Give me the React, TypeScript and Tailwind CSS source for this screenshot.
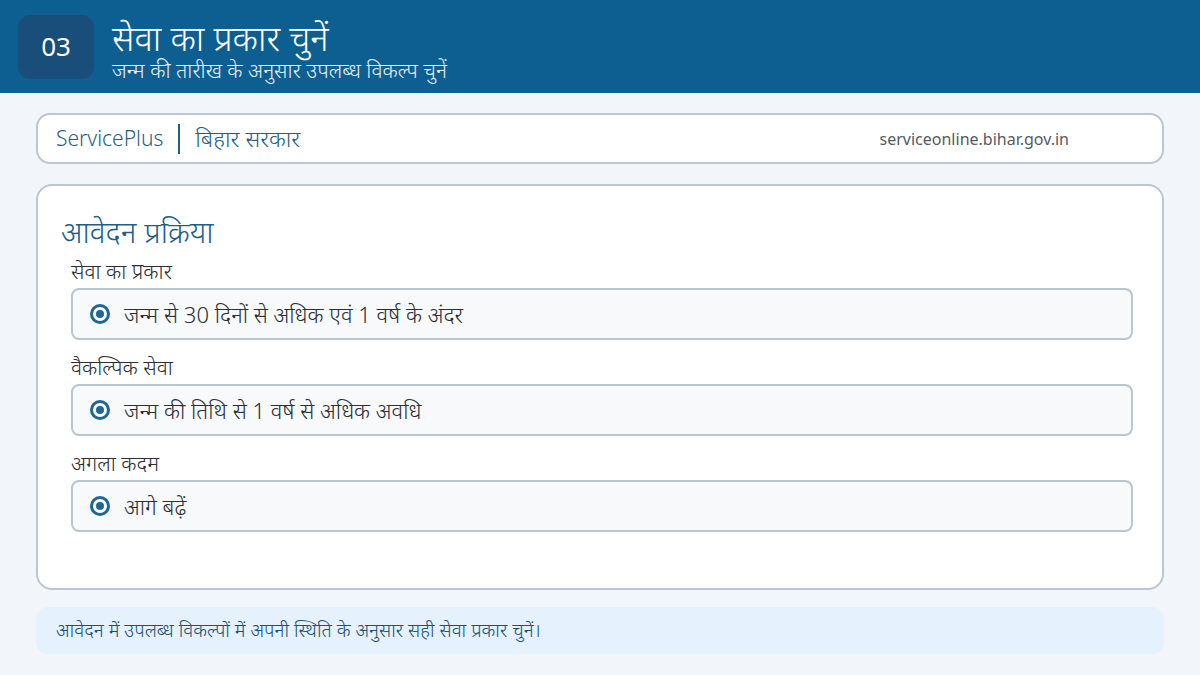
const font = { fontFamily: '"Noto Sans", "Lohit Devanagari", "Noto Sans Devanagari", sans-serif' };

const groups = [
  { label: "सेवा का प्रकार", option: "जन्म से 30 दिनों से अधिक एवं 1 वर्ष के अंदर" },
  { label: "वैकल्पिक सेवा", option: "जन्म की तिथि से 1 वर्ष से अधिक अवधि" },
  { label: "अगला कदम", option: "आगे बढ़ें" },
];

function Radio() {
  return (
    <span className="flex h-[20px] w-[20px] shrink-0 items-center justify-center rounded-full border-[3px] border-[#1d6797] bg-white">
      <span className="h-[8px] w-[8px] rounded-full bg-[#1d6797]" />
    </span>
  );
}

export default function App() {
  return (
    <div className="flex h-[675px] w-[1200px] flex-col overflow-hidden bg-[#f2f6fa] font-light" style={font}>
      {/* Header */}
      <header className="flex h-[93px] shrink-0 items-center gap-[18px] bg-[#0e5f91] pl-[18px]">
        <div className="flex h-[64px] w-[76px] items-center justify-center rounded-[12px] bg-[#1a4e7a] text-[26px] font-normal text-white">
          03
        </div>
        <div className="flex flex-col pt-[8px]">
          <div className="text-[35px] leading-[38px] text-white">सेवा का प्रकार चुनें</div>
          <div className="text-[21px] leading-[26px] text-[#e3eef7]">जन्म की तारीख के अनुसार उपलब्ध विकल्प चुनें</div>
        </div>
      </header>

      <main className="flex flex-1 flex-col px-[36px] pt-[20px]">
        {/* Top bar */}
        <div className="flex h-[51px] items-center rounded-[14px] border-2 border-[#bcc6cf] bg-white pl-[18px] pr-[93px]">
          <span className="text-[21px] text-[#1f5f87]">ServicePlus</span>
          <span className="mx-[15px] h-[30px] w-[2px] bg-[#1f5f87]" />
          <span className="text-[23px] text-[#1f5f87]">बिहार सरकार</span>
          <span className="ml-auto text-[16px] font-normal text-[#555b61]">serviceonline.bihar.gov.in</span>
        </div>

        {/* Main card */}
        <div className="mt-[20px] h-[406px] rounded-[16px] border-2 border-[#bcc6cf] bg-white pl-[23px] pr-[29px] pt-[26px]">
          <h2 className="text-[30px] leading-[40px] text-[#1f5f87]">आवेदन प्रक्रिया</h2>
          <div className="mt-[5px] flex flex-col pl-[10px]">
            {groups.map((g, i) => (
              <div key={i} className={`flex flex-col ${i > 0 ? "mt-[13px]" : ""}`}>
                <div className="h-[28px] text-[21px] leading-[28px] text-[#2b2f33]">{g.label}</div>
                <div className="mt-[3px] flex h-[52px] items-center gap-[14px] rounded-[8px] border-2 border-[#bcc6cf] bg-[#f7f9fb] pl-[17px]">
                  <Radio />
                  <span className="text-[22px] text-[#2b2f33]">{g.option}</span>
                </div>
              </div>
            ))}
          </div>
        </div>

        {/* Note */}
        <div className="mt-[17px] flex h-[47px] items-center rounded-[12px] bg-[#e5f1fc] pl-[20px] text-[19px] text-[#1f4f70]">
          आवेदन में उपलब्ध विकल्पों में अपनी स्थिति के अनुसार सही सेवा प्रकार चुनें।
        </div>
      </main>
    </div>
  );
}
